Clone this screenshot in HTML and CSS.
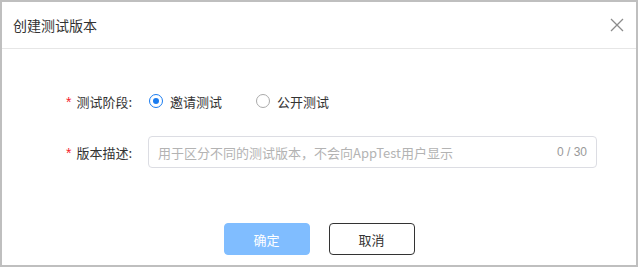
FILE: index.html
```html
<!DOCTYPE html>
<html lang="zh">
<head>
<meta charset="utf-8">
<link rel="stylesheet" href="styles.css">
</head>
<body>
<div class="frame">
  <div class="dialog">
    <div class="header">
      <span class="title">创建测试版本</span>
      <svg class="close" width="14" height="14" viewBox="0 0 14 14"><path d="M1 1 L13 13 M13 1 L1 13" stroke="#8c8c8c" stroke-width="1.3" fill="none"/></svg>
    </div>
    <div class="form">
      <div class="row">
        <div class="label"><span class="req">*</span>测试阶段:</div>
        <div class="control radios">
          <label class="radio"><span class="dot checked"></span><span>邀请测试</span></label>
          <label class="radio"><span class="dot"></span><span>公开测试</span></label>
        </div>
      </div>
      <div class="row row2">
        <div class="label"><span class="req">*</span>版本描述:</div>
        <div class="control">
          <div class="input">
            <span class="ph">用于区分不同的测试版本，不会向AppTest用户显示</span>
            <span class="count">0 / 30</span>
          </div>
        </div>
      </div>
    </div>
    <div class="footer">
      <button class="btn primary">确定</button>
      <button class="btn">取消</button>
    </div>
  </div>
</div>
</body>
</html>
```
FILE: styles.css
```css
html, body { margin: 0; padding: 0; }
body {
  width: 638px; height: 267px;
  font-family: "Noto Sans CJK SC", "Noto Sans", sans-serif;
  background: #bfbfbf;
}
.frame { padding: 2px 2px 2px 2px; height: 267px; box-sizing: border-box; }
.dialog {
  background: #fff;
  height: 263px;
  display: flex; flex-direction: column;
}
.header {
  height: 46px;
  border-bottom: 1px solid #e6e6e6;
  display: flex; align-items: center; justify-content: space-between;
  padding: 0 12px 0 11px;
}
.title { font-size: 14px; color: #333; }
.close { display: block; }
.form { padding-top: 36px; padding-right: 39px; }
.row { display: flex; align-items: center; height: 32px; }
.row2 { margin-top: 19px; }
.label {
  width: 130px; text-align: right; font-size: 13px; color: #333;
  margin-right: 16px; flex: none;
}
.req { color: #f5222d; margin-right: 5px; font-family: "Liberation Sans", sans-serif; font-size: 14px; }
.control { flex: 1; display: flex; align-items: center; }
.radios { padding-left: 1px; }
.radio { display: flex; align-items: center; font-size: 13px; color: #333; margin-right: 34px; }
.dot {
  width: 14px; height: 14px; border: 1px solid #aaa; border-radius: 50%;
  box-sizing: border-box; margin-right: 7px; position: relative;
}
.dot.checked { border-color: #1a7cf0; }
.dot.checked::after {
  content: ""; position: absolute; left: 3px; top: 3px;
  width: 6px; height: 6px; border-radius: 50%; background: #1a7cf0;
}
.input {
  flex: 1; height: 32px; box-sizing: border-box;
  border: 1px solid #dcdde3; border-radius: 4px;
  display: flex; align-items: center; justify-content: space-between;
  padding: 0 9px 0 9px;
}
.ph { font-size: 13px; color: #b3b3b3; }
.count { font-size: 12px; color: #999; font-family: "Liberation Sans", sans-serif; }
.footer {
  margin-top: auto; margin-bottom: 10px;
  display: flex; justify-content: center; gap: 19px;
}
.btn {
  width: 86px; height: 32px; box-sizing: border-box;
  border: 1px solid #333; border-radius: 4px; background: #fff;
  font-family: "Noto Sans CJK SC", sans-serif; font-size: 13px; color: #333;
  padding: 0;
}
.btn.primary { background: #80bdff; border-color: #80bdff; color: #fff; }
```
